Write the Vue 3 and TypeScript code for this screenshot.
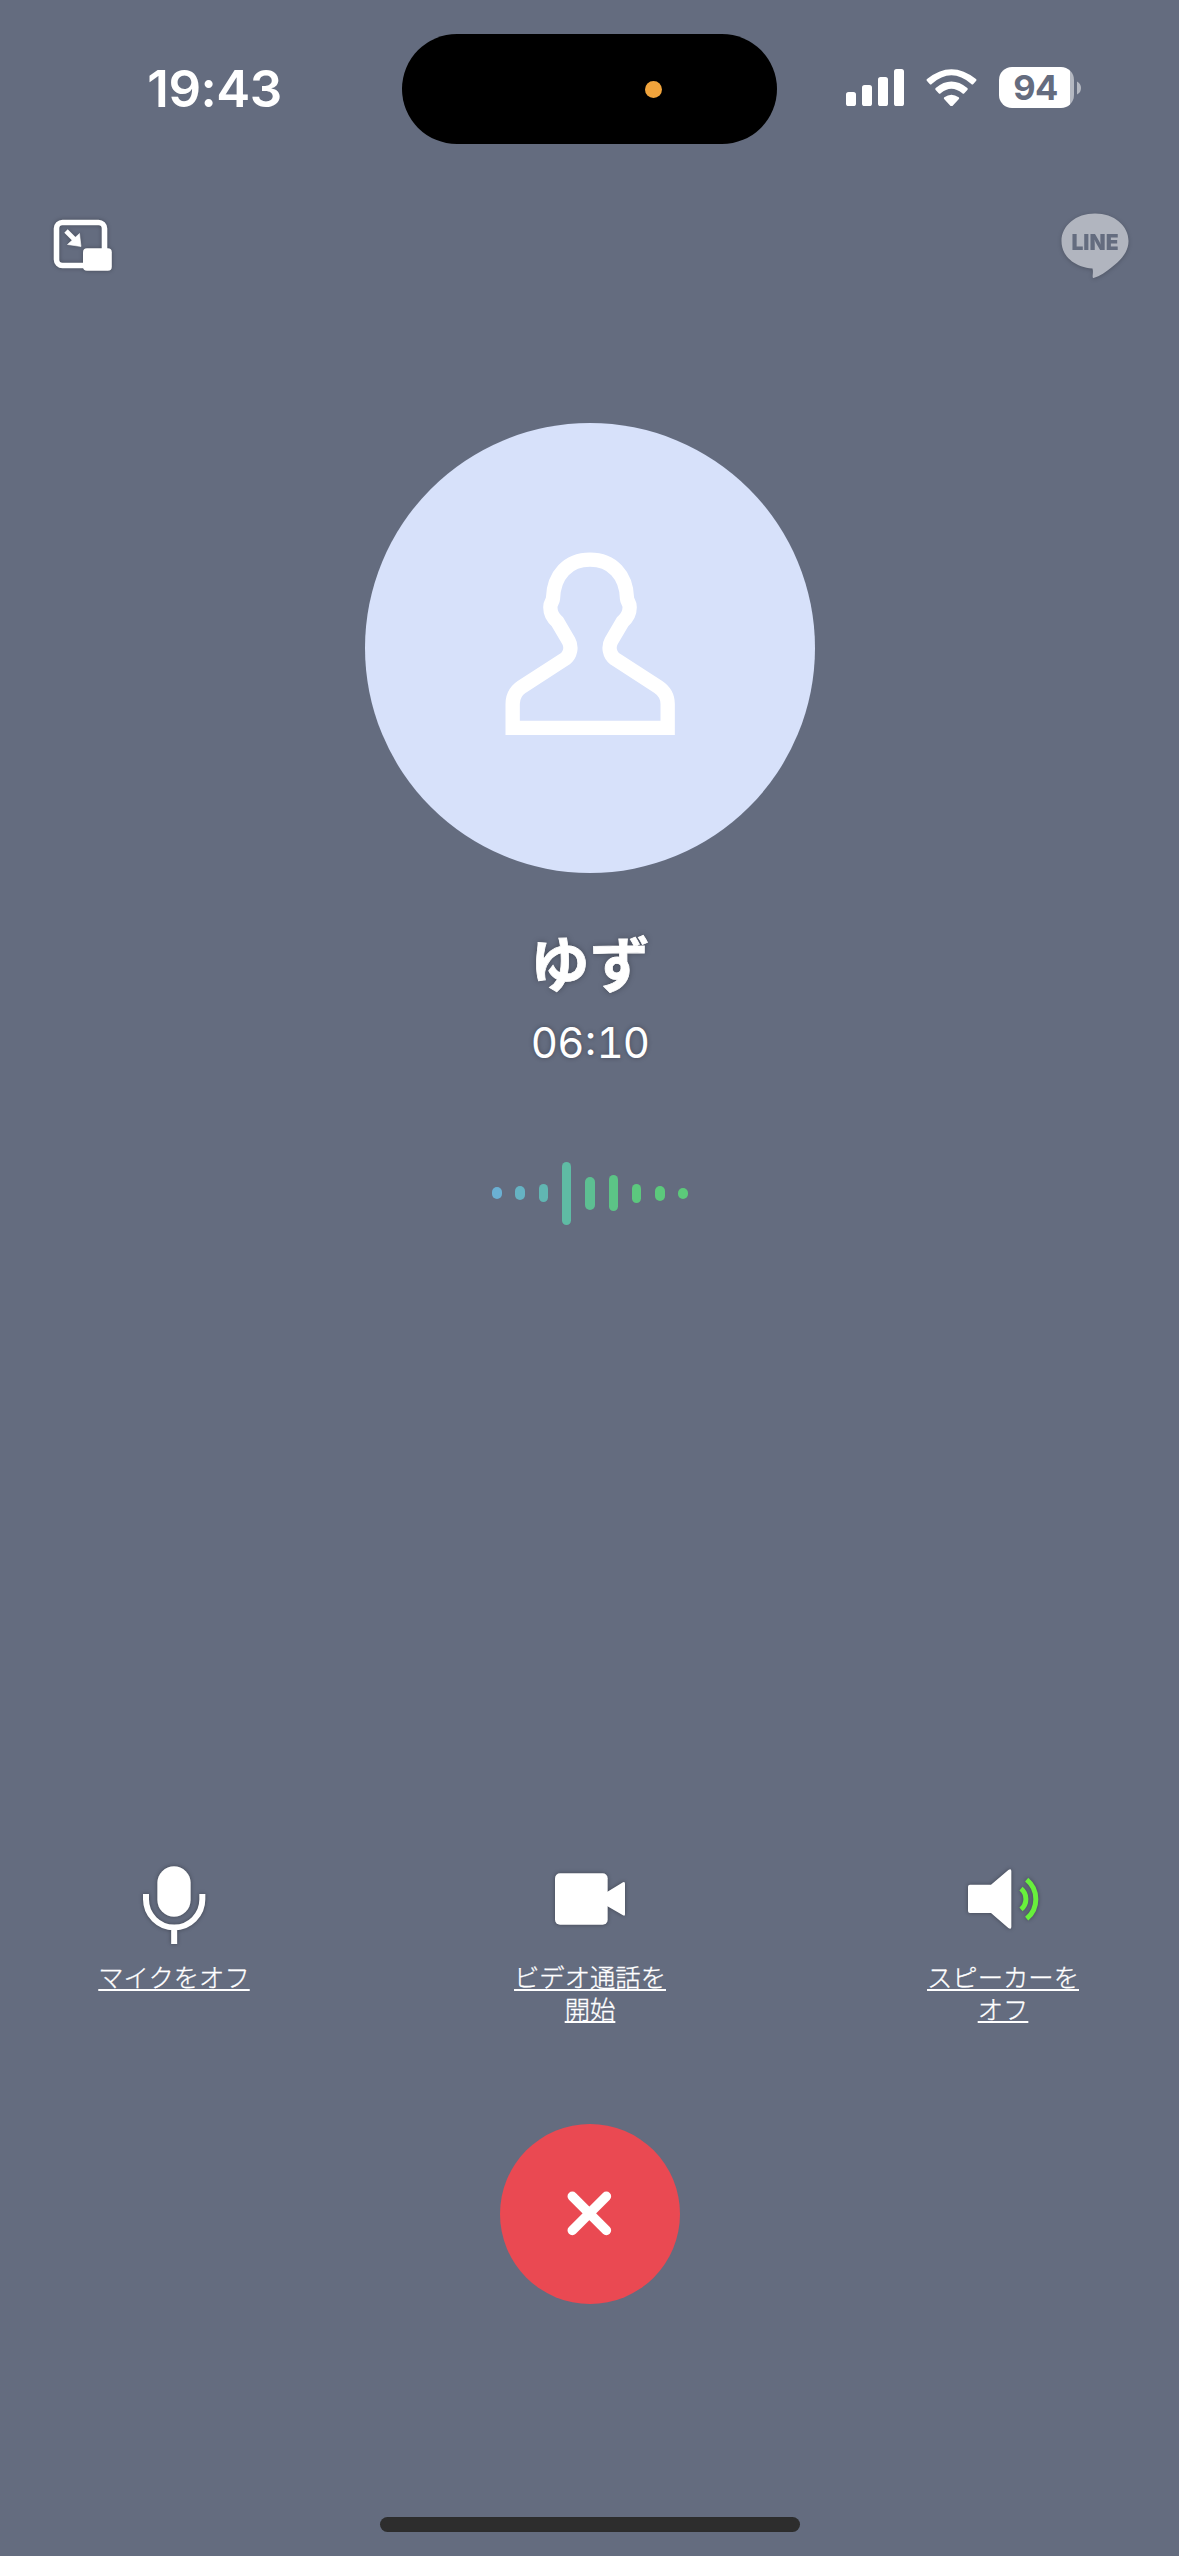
<script setup lang="ts">
interface WaveBar {
  height: number
  color: string
}

interface CallAction {
  id: 'mic' | 'video' | 'speaker'
  lines: string[]
}

const wave: WaveBar[] = [
  { height: 12, color: '#6bb0d3' },
  { height: 14, color: '#66b3c3' },
  { height: 18, color: '#61b6b2' },
  { height: 63, color: '#5fbba4' },
  { height: 33, color: '#5dbf92' },
  { height: 36, color: '#5cc486' },
  { height: 19, color: '#5cc87e' },
  { height: 15, color: '#5cc97c' },
  { height: 11, color: '#5cc97a' },
]

const actions: CallAction[] = [
  { id: 'mic', lines: ['マイクをオフ'] },
  { id: 'video', lines: ['ビデオ通話を', '開始'] },
  { id: 'speaker', lines: ['スピーカーを', 'オフ'] },
]
</script>

<template>
  <main class="screen">
    <header class="status">
      <div class="time">19:43</div>
      <div class="island"><span class="rec-dot"></span></div>
      <div class="indicators">
        <svg class="signal" viewBox="0 0 58 37">
          <rect x="0" y="23" width="10" height="14" rx="2.6" />
          <rect x="16" y="16" width="10" height="21" rx="2.6" />
          <rect x="32" y="8" width="10" height="29" rx="2.6" />
          <rect x="48" y="0" width="10" height="37" rx="2.6" />
        </svg>
        <svg class="wifi" viewBox="318 86 153 113">
          <path d="M321 116 Q318 119 321 122 L329 131 Q332 134 335 131 Q394 79 454 131 Q457 134 460 131 L468 122 Q471 119 468 116 Q394 57 321 116Z" />
          <path d="M347 143 Q344 146 347 149 L356 159 Q359 162 362 159 Q394 132 427 159 Q430 162 433 159 L442 149 Q445 146 442 143 Q394 104 347 143Z" />
          <path d="M373 171 Q370 174 373 177 L391 196 Q394.500 199 398 196 L416 177 Q419 174 416 171 Q394 155 373 171Z" />
        </svg>
        <div class="battery"><span>94</span></div>
        <svg class="nub" viewBox="0 0 4 14"><path d="M0 0.500 Q4 2.500 4 7 Q4 11.500 0 13.500Z" /></svg>
      </div>
    </header>

    <nav class="toolbar">
      <svg class="pip" viewBox="0 0 72 66">
        <rect x="9.500" y="9.500" width="48" height="43" rx="6" fill="none" stroke="#fff" stroke-width="5.600" />
        <path d="M19 18 L28 27" stroke="#fff" stroke-width="4.800" />
        <path d="M34 33.500 L32.500 20.500 L20.500 31.500Z" fill="#fff" stroke="#fff" stroke-width="0.600" stroke-linejoin="round" />
        <rect x="36" y="35.300" width="28.800" height="22.500" rx="4" fill="#fff" />
      </svg>
      <svg class="line-logo" viewBox="0 0 80 76">
        <path d="M40 6.500 C59 6.500 73.500 18.500 73.500 34 C73.500 45 66 53 57 60 C51 65 45 69 38.500 71 C36.500 71 38.800 66 37.500 61.500 C19 60 6.500 49 6.500 34 C6.500 18.500 21 6.500 40 6.500Z" fill="#b1b5bf" />
        <text x="40" y="43" text-anchor="middle" textLength="47" lengthAdjust="spacingAndGlyphs">LINE</text>
      </svg>
    </nav>

    <section class="caller">
      <svg class="avatar" viewBox="45 39 1350 1350">
        <circle cx="720" cy="714" r="675" fill="#d7e1fa" />
        <path
          d="M720 449 C786 449 829 495 831 565 C832 577 839 577 839 592 C839 608 831 624 818 635 L784 693 C774 711 779 735 794 746 L924 830 Q953 849 953 882 V953.500 H488 V882 Q488 849 516 830 L646 746 C661 735 666 711 656 693 L622 635 C609 624 601 608 601 592 C601 577 608 577 609 565 C611 495 654 449 720 449Z"
          fill="none" stroke="#fff" stroke-width="43"
        />
      </svg>
      <h1 class="name">ゆず</h1>
      <div class="timer">06<span class="colon">:</span>10</div>
      <div class="wave">
        <i v-for="(bar, i) in wave" :key="i" :style="{ height: bar.height + 'px', background: bar.color }"></i>
      </div>
    </section>

    <section class="actions">
      <button v-for="action in actions" :key="action.id" class="action">
        <svg v-if="action.id === 'mic'" class="icon" viewBox="102 30 360 300">
          <rect x="232" y="79" width="100" height="151" rx="50" fill="#fff" />
          <path d="M198 162 V178 A84 84 0 0 0 367 178 V162 M282.500 264 V312" fill="none" stroke="#fff" stroke-width="18" />
        </svg>
        <svg v-else-if="action.id === 'video'" class="icon" viewBox="120 30 360 300">
          <rect x="195" y="100" width="158" height="154" rx="15" fill="#fff" />
          <path d="M351 156 L399 127 Q405 124 405 131 V223 Q405 230 399 226 L351 198Z" fill="#fff" />
        </svg>
        <svg v-else class="icon" viewBox="99 30 360 300">
          <path d="M180 134 H243 L295 90 Q304 84 304 94 V260 Q304 270 295 264 L243 219 H180 Q174 219 174 213 V140 Q174 134 180 134Z" fill="#fff" />
          <path d="M333 146 A40 40 0 0 1 333 208 M350 119 A76 76 0 0 1 350 236" fill="none" stroke="#68f03c" stroke-width="15" />
        </svg>
        <span class="label"><span v-for="line in action.lines" :key="line">{{ line }}</span></span>
      </button>
    </section>

    <button class="hangup">
      <svg viewBox="420 42 540 540">
        <path d="M637 259 L739 361 M739 259 L637 361" stroke="#fff" stroke-width="29" stroke-linecap="round" />
      </svg>
    </button>

    <div class="home-indicator"></div>
  </main>
</template>

<style>
body {
  margin: 0;
  background: #646c7f;
}
</style>

<style scoped>
.screen {
  display: flex;
  flex-direction: column;
  align-items: center;
  width: 1179px;
  height: 2556px;
  overflow: hidden;
  background: #646c7f;
  color: #fff;
  font-family: Inter, "Noto Sans CJK JP", sans-serif;
}

svg {
  display: block;
}

button {
  padding: 0;
  border: 0;
  background: none;
  color: inherit;
  font: inherit;
}

.status {
  display: grid;
  grid-template-columns: 402px 375px 402px;
  width: 100%;
  height: 111px;
  margin-top: 33px;
  align-items: center;
}

.time {
  padding: 1px 0 0 27px;
  text-align: center;
  font-size: 51px;
  line-height: 60px;
  font-weight: 600;
  letter-spacing: -0.500px;
}

.island {
  display: flex;
  align-items: center;
  justify-content: flex-end;
  height: 110.500px;
  margin-top: 0.500px;
  border-radius: 56px;
  background: #000;
}

.rec-dot {
  width: 17px;
  height: 17px;
  margin: 2px 115px 0 0;
  border-radius: 50%;
  background: #f1a43c;
}

.indicators {
  display: flex;
  align-items: center;
  padding-left: 69px;
  padding-bottom: 2px;
  fill: #fff;
}

.signal {
  width: 58px;
  height: 37px;
}

.wifi {
  width: 51px;
  height: 37.670px;
  margin-left: 22px;
}

.battery {
  display: flex;
  justify-content: center;
  box-sizing: border-box;
  width: 75px;
  height: 41px;
  margin-left: 22px;
  padding-right: 2px;
  border-radius: 13px;
  background: linear-gradient(90deg, #fff 71px, #b4b8c1 71px);
  color: #646c7f;
  font-size: 34.500px;
  line-height: 42px;
  font-weight: 700;
  letter-spacing: -0.500px;
}

.nub {
  width: 4px;
  height: 14px;
  margin-left: 3px;
  fill: #b4b8c1;
}

.toolbar {
  display: flex;
  justify-content: space-between;
  align-items: flex-start;
  box-sizing: border-box;
  width: 100%;
  height: 80px;
  margin-top: 63px;
  padding: 0 44px 0 47px;
}

.pip {
  width: 72px;
  height: 66px;
  margin-top: 6px;
  filter: drop-shadow(0 0 2px rgba(0, 0, 0, 0.3));
}

.line-logo {
  width: 80px;
  height: 76px;
  filter: drop-shadow(0 1px 2px rgba(0, 0, 0, 0.2));
}

.line-logo text {
  fill: #646c7f;
  font-size: 22px;
  font-weight: 900;
}

.caller {
  display: flex;
  flex-direction: column;
  align-items: center;
  margin-top: 136px;
  margin-left: 1px;
}

.avatar {
  width: 450px;
  height: 450px;
}

.name {
  margin: 44px 0 0;
  font-family: "Noto Sans CJK JP", sans-serif;
  font-size: 60px;
  line-height: 88px;
  font-weight: 700;
  -webkit-text-stroke: 0.800px #fff;
  text-shadow: 0 0 6px rgba(0, 0, 0, 0.35);
}

.timer {
  margin-top: 13px;
  font-size: 42px;
  line-height: 50px;
  font-weight: 400;
  font-variant-numeric: tabular-nums;
  letter-spacing: -0.900px;
  text-shadow: 0 0 5px rgba(0, 0, 0, 0.3);
}

.colon {
  display: inline-block;
  width: 13px;
  text-align: center;
  font-variant-numeric: normal;
  transform: translateY(-3px);
}

.wave {
  display: flex;
  align-items: center;
  gap: 13.800px;
  height: 66px;
  margin-top: 92px;
}

.wave i {
  width: 9.500px;
  border-radius: 5px;
}

.actions {
  display: grid;
  grid-template-columns: 416px 413px 120px;
  width: 951px;
  margin-top: 624px;
}

.action {
  display: flex;
  flex-direction: column;
  align-items: center;
  width: 120px;
  height: 178px;
}

.icon {
  width: 120px;
  height: 100px;
  filter: drop-shadow(0 0 2px rgba(0, 0, 0, 0.35));
}

.label {
  display: flex;
  flex-direction: column;
  align-items: center;
  margin-top: 10px;
  font-family: "Noto Sans CJK JP", sans-serif;
  font-size: 25.330px;
  line-height: 32.300px;
  font-weight: 300;
  -webkit-text-stroke: 0.300px #fff;
  white-space: nowrap;
}

.label span {
  text-decoration: underline;
  text-decoration-thickness: 2px;
  text-underline-offset: 2px;
  text-decoration-skip-ink: none;
}

.hangup {
  width: 180px;
  height: 180px;
  margin-top: 96px;
  margin-left: 1px;
  border-radius: 50%;
  background: #ea4952;
}

.home-indicator {
  width: 420px;
  height: 15px;
  margin-top: 213px;
  margin-left: 1px;
  border-radius: 8px;
  background: #2d2d2d;
}
</style>
